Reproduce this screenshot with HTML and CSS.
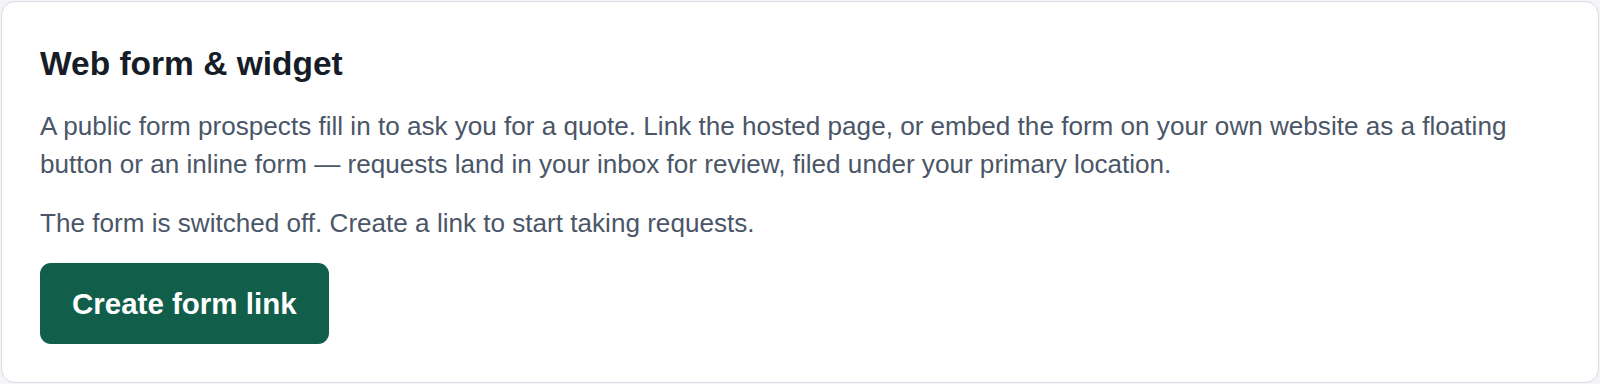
FILE: index.html
```html
<!DOCTYPE html>
<html lang="en">
<head>
<meta charset="utf-8">
<title>Web form &amp; widget</title>
<link rel="stylesheet" href="styles.css">
</head>
<body>
  <section class="card">
    <h2 class="card-title">Web form &amp; widget</h2>
    <p class="card-text">A public form prospects fill in to ask you for a quote. Link the hosted page, or embed the form on your own website as a floating button or an inline form — requests land in your inbox for review, filed under your primary location.</p>
    <p class="card-text status">The form is switched off. Create a link to start taking requests.</p>
    <button class="btn-primary" type="button">Create form link</button>
  </section>
</body>
</html>
```

FILE: styles.css
```css
html, body {
  margin: 0;
  padding: 0;
  background: #f4f5f7;
}

body {
  padding: 1px;
  font-family: "Liberation Sans", Arial, sans-serif;
}

.card {
  box-sizing: border-box;
  height: 382px;
  background: #ffffff;
  border: 1.5px solid #d7dbe4;
  border-radius: 14px;
  padding: 43px 38px 36px;
  display: flex;
  flex-direction: column;
  align-items: flex-start;
}

.card-title {
  margin: 0 0 23.5px;
  font-size: 33.5px;
  line-height: 38px;
  font-weight: 700;
  color: #161d27;
}

.card-text {
  margin: 0;
  font-size: 26.1px;
  line-height: 38.5px;
  color: #4a5667;
}

.status {
  margin-top: 20px;
}

.btn-primary {
  margin-top: 21px;
  height: 81px;
  padding: 0 32px;
  border: none;
  border-radius: 11px;
  background: #115e4b;
  color: #ffffff;
  font-family: "Liberation Sans", Arial, sans-serif;
  font-size: 29.5px;
  font-weight: 700;
  cursor: pointer;
}
```
